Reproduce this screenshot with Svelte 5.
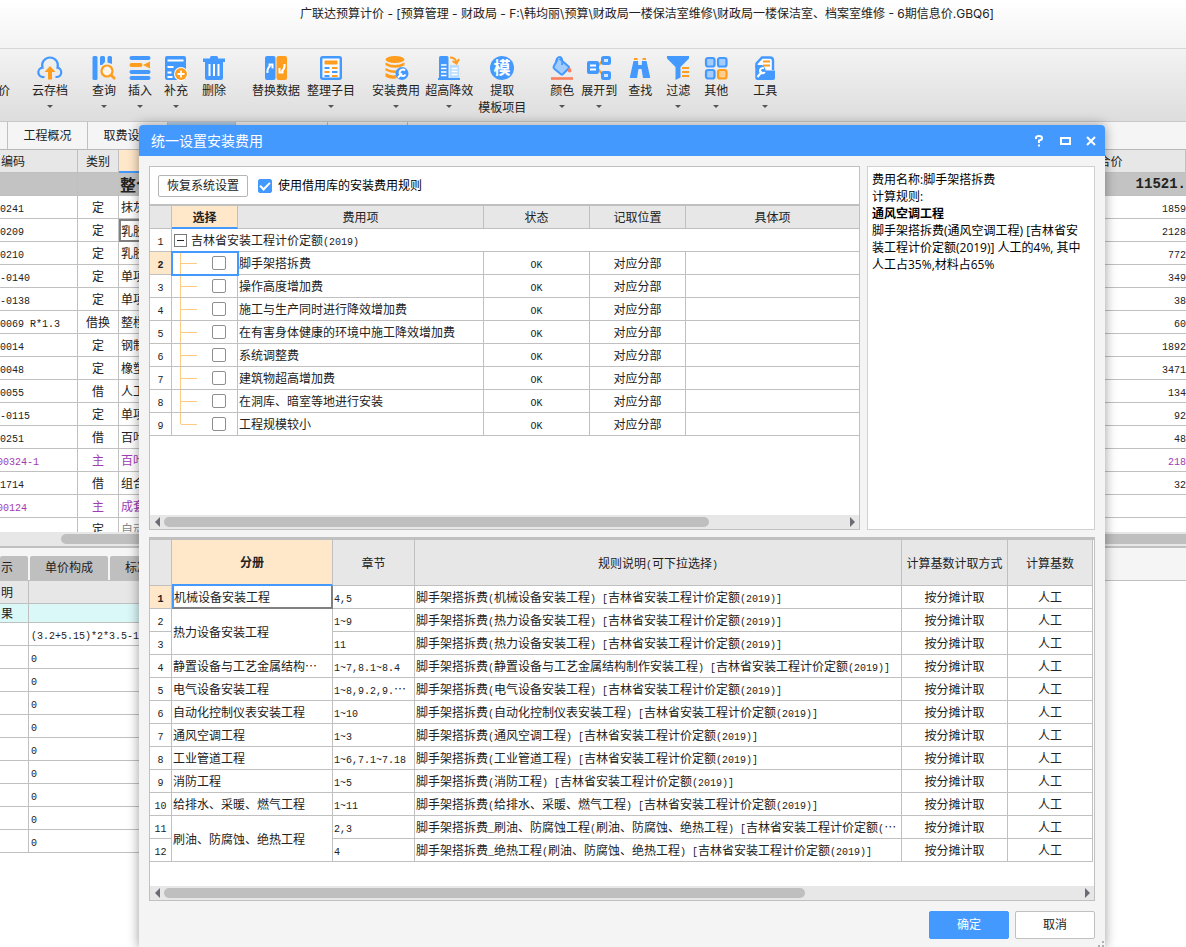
<script lang="ts">
    type Tool = { label: string; sub?: string; icon: string; arrow?: boolean };
    type Group = { lead: number; gap: number; tools: Tool[] };

    const blue = "#4499ff";
    const orange = "#ff9d1e";

    const icons: Record<string, string> = {
        cloud: `<path d="M6.500 21H5.500a4.500 4.500 0 0 1-1-9.300A7.900 7.900 0 0 1 12 1.500a7.900 7.900 0 0 1 7.500 10.200a4.700 4.700 0 0 1-1 9.300H17.500" fill="none" stroke="${blue}" stroke-width="2.200"/><path d="M12 10l5.500 6H14v7.500h-4V16H6.500z" fill="${orange}"/>`,
        query: `<rect x="0.500" y="0" width="5" height="24" rx="1.500" fill="${blue}"/><path d="M8 1.500Q8 0 9.500 0h2Q13 0 13 1.500V6l-3 3H8zM15.500 1.500Q15.500 0 17 0h1.500Q20 0 20 1.500V8l-4.500-1.500z" fill="${blue}"/><circle cx="15" cy="15" r="5.500" fill="#fff5e8" stroke="${orange}" stroke-width="2.200"/><path d="M19 19l4 4" stroke="${orange}" stroke-width="2.600"/>`,
        insert: `<path d="M3.500 2h17M3.500 16h17M3.500 22h17" stroke="${blue}" stroke-width="4" stroke-linecap="round"/><path d="M3.500 9h9" stroke="${orange}" stroke-width="4" stroke-linecap="round"/><path d="M15 9l7-3.500v7z" fill="${orange}"/>`,
        add: `<rect x="1" y="0" width="21" height="24" rx="2" fill="${blue}"/><path d="M3.500 4.500h16M3.500 11h6M3.500 16.500h4M3.500 21h5" stroke="#fff" stroke-width="2"/><circle cx="17" cy="18" r="7" fill="#fff"/><circle cx="17" cy="18" r="6" fill="${orange}"/><path d="M17 14.500v7M13.500 18h7" stroke="#fff" stroke-width="1.800"/>`,
        trash: `<path d="M1 2.500h7V1.500Q8 0 9.500 0h5Q16 0 16 1.500v1h7V6H1z" fill="${blue}"/><path d="M3 5h18v17q0 2-2 2H5q-2 0-2-2z" fill="${blue}"/><path d="M7.500 8v12M12 8v12M16.500 8v12" stroke="#fff" stroke-width="2"/>`,
        swap: `<rect x="1" y="0" width="10.500" height="24" rx="2" fill="${blue}"/><rect x="12.500" y="0" width="10.500" height="24" rx="2" fill="${orange}"/><path d="M3.500 17q-.5-5 3-7.500M4.500 8.500h4v4" fill="none" stroke="#fff" stroke-width="2"/><path d="M20.500 8q.5 5-3 7.500M15.500 12v4.500h4" fill="none" stroke="#fff" stroke-width="2"/>`,
        list: `<rect x="2.200" y="1.200" width="19.600" height="21.600" rx="1.500" fill="#f7faff" stroke="${blue}" stroke-width="2.400"/><rect x="5.500" y="4.500" width="13" height="4" rx="1" fill="${orange}"/><path d="M5.500 12h5M13 16h5.500M5.500 20h5" stroke="${blue}" stroke-width="2"/><path d="M13 12h5.500M5.500 16h5M13 20h5.500" stroke="${orange}" stroke-width="2"/>`,
        coins: `<ellipse cx="11" cy="3.500" rx="9.500" ry="3.500" fill="${orange}"/><path d="M1.500 6.500q9 5 19 0v2.800q-9 5-19 0zM1.500 12q9 5 19 0v2.500q-9 5-19 0zM1.500 17q6 3.500 11 2v3.200q-6 1.500-11-1.500z" fill="${orange}"/><circle cx="18" cy="17.500" r="6.500" fill="${blue}"/><path d="M14 21.500l4-4M21 14.500a3.200 3.200 0 1 0 .5 4" stroke="#fff" stroke-width="2" fill="none"/>`,
        tower: `<path d="M2 24V1.500Q2 0 3.500 0H10q1.500 0 1.500 1.500V24z" fill="${blue}"/><path d="M4 9h5.500M4 12.500h5.500M4 16h5.500M4 19.500h5.500" stroke="#fff" stroke-width="1.600"/><path d="M13 9h9v13h-9z" fill="#b9dcff"/><path d="M14.500 12.500h6M14.500 15.500h6M14.500 18.500h6" stroke="#fff" stroke-width="1.500"/><path d="M1 23h22" stroke="${blue}" stroke-width="2"/><path d="M13 1.500q5.500 0 6.500 5M15.500 5l4 2.500L22 3" fill="none" stroke="${orange}" stroke-width="2"/>`,
        extract: `<circle cx="12" cy="12" r="12" fill="${blue}"/><text x="12" y="18" text-anchor="middle" font-size="17" font-weight="bold" fill="#fff">模</text>`,
        paint: `<path d="M9.500 2.500l9 8q1 1 0 2L13 18q-1 1-2 .2L4.500 13q-1.500-1-.8-2.500l4-7.500" fill="#a3ccff" stroke="${blue}" stroke-width="2"/><path d="M6 7q0-6 4-6 3 0 2 8" fill="none" stroke="${blue}" stroke-width="1.800"/><path d="M19.500 11q3 3.500 1.500 5-1.500 1-3-.2-.8-1.300 1.500-4.800z" fill="#fa7f5e"/><path d="M1 22.500h22" stroke="#fa7f5e" stroke-width="2.600"/>`,
        expand: `<path d="M11 10l5-6M11 13l5 6" stroke="${orange}" stroke-width="2"/><rect x="0" y="5" width="12" height="13" rx="2" fill="${blue}"/><path d="M3 9.500h6M3 13.500h6" stroke="#fff" stroke-width="1.800"/><rect x="15.500" y="1.500" width="7" height="6" rx="1" fill="#d3e8ff" stroke="${blue}" stroke-width="3"/><rect x="15.500" y="16.500" width="7" height="6" rx="1" fill="#d3e8ff" stroke="${blue}" stroke-width="3"/>`,
        find: `<path d="M5.500 5H10l.5 8L9 22H2.500Q1.500 22 2 20.500zM18.500 5H14l-.5 8L15 22h6.500q1 0 .5-1.500z" fill="${blue}"/><path d="M9.500 9h5v4h-5z" fill="${blue}"/><path d="M6 3h3.500M14.500 3H18" stroke="${orange}" stroke-width="2"/>`,
        filter: `<path d="M1 0h22v2.500L14.500 11v10.500L9.500 24V11L1 2.500z" fill="${blue}"/><path d="M16 12h7M16 16h7M16 20h7" stroke="${orange}" stroke-width="2"/>`,
        other: `<g fill="#a3ccff" stroke="${blue}" stroke-width="2.200"><rect x="2" y="2" width="8.500" height="8.500" rx="2"/><rect x="14" y="2" width="8.500" height="8.500" rx="2"/><rect x="2" y="14" width="8.500" height="8.500" rx="2"/></g><rect x="14" y="14" width="8.500" height="8.500" rx="2" fill="#ffce8f" stroke="${orange}" stroke-width="2.200"/>`,
        kit: `<path d="M3.500 12V7.500l5.500-6h8q3 0 3 3V14" fill="#fff" stroke="${blue}" stroke-width="2.400"/><path d="M10 5.500h7M10 9.500h7" stroke="${orange}" stroke-width="2"/><path d="M2.300 9H9q3.500 2 3.500 5.500h9.500V22q0 2-2 2H4.300q-2 0-2-2z" fill="${blue}"/><path d="M4.500 21l4.500-5.500M11 12.500a2.600 2.600 0 1 0 .8 3.500" stroke="#fff" stroke-width="2" fill="none"/>`,
    };

    const groups: Group[] = [
        { lead: 22, gap: 0, tools: [{ label: "云存档", icon: "cloud", arrow: true }] },
        {
            lead: 24,
            gap: 12,
            tools: [
                { label: "查询", icon: "query", arrow: true },
                { label: "插入", icon: "insert", arrow: true },
                { label: "补充", icon: "add", arrow: true },
            ],
        },
        { lead: 14, gap: 0, tools: [{ label: "删除", icon: "trash" }] },
        {
            lead: 26,
            gap: 7,
            tools: [
                { label: "替换数据", icon: "swap" },
                { label: "整理子目", icon: "list", arrow: true },
            ],
        },
        {
            lead: 17,
            gap: 5,
            tools: [
                { label: "安装费用", icon: "coins", arrow: true },
                { label: "超高降效", icon: "tower", arrow: true },
                { label: "提取", sub: "模板项目", icon: "extract" },
            ],
        },
        {
            lead: 24,
            gap: 7,
            tools: [
                { label: "颜色", icon: "paint", arrow: true },
                { label: "展开到", icon: "expand", arrow: true },
            ],
        },
        {
            lead: 11,
            gap: 14,
            tools: [
                { label: "查找", icon: "find" },
                { label: "过滤", icon: "filter", arrow: true },
                { label: "其他", icon: "other", arrow: true },
            ],
        },
        { lead: 25, gap: 0, tools: [{ label: "工具", icon: "kit", arrow: true }] },
    ];

    const budget = [
        { code: "0241", kind: "定", name: "抹灰", total: "1859" },
        { code: "0209", kind: "定", name: "乳胶", total: "2128", focus: true },
        { code: "0210", kind: "定", name: "乳胶", total: "772" },
        { code: "-0140", kind: "定", name: "单项", total: "349" },
        { code: "-0138", kind: "定", name: "单项", total: "38" },
        { code: "0069 R*1.3", kind: "借换", name: "整樘", total: "60" },
        { code: "0014", kind: "定", name: "钢制", total: "1892" },
        { code: "0048", kind: "定", name: "橡塑", total: "3471" },
        { code: "0055", kind: "借", name: "人工", total: "134" },
        { code: "-0115", kind: "定", name: "单项", total: "92" },
        { code: "0251", kind: "借", name: "百叶", total: "48" },
        { code: "00324-1", kind: "主", name: "百叶", total: "218", main: true },
        { code: "1714", kind: "借", name: "组合", total: "32" },
        { code: "00124", kind: "主", name: "成套", total: "", main: true },
        { code: "", kind: "定", name: "自动", total: "", auto: true },
    ];

    const quantities = ["(3.2+5.15)*2*3.5-1", "0", "0", "0", "0", "0", "0", "0", "0", "0"];

    let fees = $state(
        [
            "脚手架搭拆费",
            "操作高度增加费",
            "施工与生产同时进行降效增加费",
            "在有害身体健康的环境中施工降效增加费",
            "系统调整费",
            "建筑物超高增加费",
            "在洞库、暗室等地进行安装",
            "工程规模较小",
        ].map((name) => ({ name, checked: false })),
    );
    let borrow = $state(true);

    const quota = "[吉林省安装工程计价定额(2019)]";
    const rules = [
        { book: "机械设备安装工程", span: 1, chapter: "4,5", rule: `脚手架搭拆费(机械设备安装工程) ${quota}` },
        { book: "热力设备安装工程", span: 2, chapter: "1~9", rule: `脚手架搭拆费(热力设备安装工程) ${quota}` },
        { span: 0, chapter: "11", rule: `脚手架搭拆费(热力设备安装工程) ${quota}` },
        { book: "静置设备与工艺金属结构…", span: 1, chapter: "1~7,8.1~8.4", rule: `脚手架搭拆费(静置设备与工艺金属结构制作安装工程) ${quota}` },
        { book: "电气设备安装工程", span: 1, chapter: "1~8,9.2,9.…", rule: `脚手架搭拆费(电气设备安装工程) ${quota}` },
        { book: "自动化控制仪表安装工程", span: 1, chapter: "1~10", rule: `脚手架搭拆费(自动化控制仪表安装工程) ${quota}` },
        { book: "通风空调工程", span: 1, chapter: "1~3", rule: `脚手架搭拆费(通风空调工程) ${quota}` },
        { book: "工业管道工程", span: 1, chapter: "1~6,7.1~7.18", rule: `脚手架搭拆费(工业管道工程) ${quota}` },
        { book: "消防工程", span: 1, chapter: "1~5", rule: `脚手架搭拆费(消防工程) ${quota}` },
        { book: "给排水、采暖、燃气工程", span: 1, chapter: "1~11", rule: `脚手架搭拆费(给排水、采暖、燃气工程) ${quota}` },
        { book: "刷油、防腐蚀、绝热工程", span: 2, chapter: "2,3", rule: "脚手架搭拆费_刷油、防腐蚀工程(刷油、防腐蚀、绝热工程) [吉林省安装工程计价定额(…" },
        { span: 0, chapter: "4", rule: `脚手架搭拆费_绝热工程(刷油、防腐蚀、绝热工程) ${quota}` },
    ];
</script>

<!-- latin runs are set half as wide as the chinese characters -->
{#snippet mixed(text: string)}
    {#each text.split(/([\x20-\x7e]+)/) as run, i}{#if i % 2}<span class="half">{run}</span>{:else}{run}{/if}{/each}
{/snippet}

{#snippet scrollbar(size: number)}
    <div class="scrollbar">
        <svg width="14" height="14"><path d="M10 2v10L5 7z" /></svg>
        <div class="track"><div class="thumb" style:width="{size}%"></div></div>
        <svg width="14" height="14"><path d="M5 2v10l5-5z" /></svg>
    </div>
{/snippet}

<div class="app">
    <header class="titlebar">
        广联达预算计价 - [预算管理 - 财政局 - F:\韩均丽\预算\财政局一楼保洁室维修\财政局一楼保洁室、档案室维修 - 6期信息价.GBQ6]
    </header>

    <nav class="toolbar">
        <button class="tool cut"><span>价</span></button>
        {#each groups as group}
            <div class="group" style:margin-left="{group.lead}px" style:gap="{group.gap}px">
                {#each group.tools as tool}
                    <button class="tool">
                        <svg width="24" height="24" viewBox="0 0 24 24">{@html icons[tool.icon]}</svg>
                        <span>{tool.label}</span>
                        {#if tool.sub}<span>{tool.sub}</span>{/if}
                        {#if tool.arrow}<i class="arrow"></i>{/if}
                    </button>
                {/each}
            </div>
        {/each}
    </nav>

    <nav class="tabs">
        <button class="stub" aria-label="上一页"></button>
        <button>工程概况</button>
        <button>取费设置</button>
        <button class="active" aria-label="预算书"></button>
        <button class="wide" aria-label="人材机"></button>
        <button aria-label="费用"></button>
    </nav>

    <div class="budget">
        <table>
            <colgroup><col class="w78" /><col class="w41" /><col /><col class="w150" /></colgroup>
            <thead>
                <tr><th class="left">编码</th><th>类别</th><th class="current"></th><th>合价</th></tr>
            </thead>
            <tbody>
                <tr class="sum"><td></td><td></td><td>整个</td><td class="num">11521.</td></tr>
                {#each budget as row}
                    <tr class:main={row.main} class:auto={row.auto}>
                        <td class="code">{@render mixed(row.code)}</td>
                        <td class="center">{row.kind}</td>
                        <td class="name" class:focus={row.focus}>{row.name}</td>
                        <td class="num">{@render mixed(row.total)}</td>
                    </tr>
                {/each}
            </tbody>
        </table>
    </div>
    <div class="splitter"><div></div></div>

    <nav class="subtabs">
        <button class="first">示</button>
        <button>单价构成</button>
        <button>标准换算</button>
    </nav>
    <table class="quantity">
        <colgroup><col class="w29" /><col /></colgroup>
        <thead>
            <tr><th class="left">明</th><th></th></tr>
        </thead>
        <tbody>
            <tr class="result"><td>果</td><td></td></tr>
            {#each quantities as value}
                <tr><td></td><td>{@render mixed(value)}</td></tr>
            {/each}
        </tbody>
    </table>

    <div class="dialog" role="dialog" aria-labelledby="dialog-title">
        <header>
            <h1 id="dialog-title">统一设置安装费用</h1>
            <button aria-label="帮助">
                <svg width="12" height="12"><path d="M3 4V2.500Q3 1 6 1t3 2.200Q9 5 6 5.500V8M6 9.500v2" /></svg>
            </button>
            <button aria-label="最大化">
                <svg width="12" height="12"><path d="M2 3h9v6H2z" /></svg>
            </button>
            <button aria-label="关闭">
                <svg width="12" height="12"><path d="M2 2l8 8M10 2l-8 8" /></svg>
            </button>
        </header>

        <div class="upper">
            <section class="panel">
                <div class="options">
                    <button class="restore">恢复系统设置</button>
                    <label><input type="checkbox" bind:checked={borrow} />使用借用库的安装费用规则</label>
                </div>
                <div class="sheet fees">
                    <table>
                        <colgroup>
                            <col class="w22" /><col class="w66" /><col class="w246" /><col class="w106" /><col class="w96" /><col />
                        </colgroup>
                        <thead>
                            <tr>
                                <th></th>
                                <th class="current">选择</th>
                                <th>费用项</th>
                                <th>状态</th>
                                <th>记取位置</th>
                                <th>具体项</th>
                            </tr>
                        </thead>
                        <tbody>
                            <tr>
                                <td class="index">{@render mixed("1")}</td>
                                <td colspan="5">
                                    <div class="root">
                                        <button class="toggle" aria-label="折叠"></button>
                                        <span>{@render mixed("吉林省安装工程计价定额(2019)")}</span>
                                    </div>
                                </td>
                            </tr>
                            {#each fees as fee, i}
                                <tr>
                                    <td class="index" class:picked={i === 0}>{@render mixed(String(i + 2))}</td>
                                    <td class="pick" class:selected={i === 0}>
                                        <div class="leaf">
                                            <i class="branch" class:last={i === fees.length - 1}></i>
                                            <input type="checkbox" aria-label={fee.name} bind:checked={fee.checked} />
                                        </div>
                                    </td>
                                    <td>{fee.name}</td>
                                    <td class="center">{@render mixed("OK")}</td>
                                    <td class="center">对应分部</td>
                                    <td></td>
                                </tr>
                            {/each}
                        </tbody>
                    </table>
                </div>
                {@render scrollbar(80)}
            </section>

            <section class="panel info">
                <p>费用名称:脚手架搭拆费</p>
                <p>计算规则:</p>
                <p><b>通风空调工程</b></p>
                <p>脚手架搭拆费(通风空调工程) [吉林省安装工程计价定额(2019)] 人工的4%, 其中人工占35%,材料占65%</p>
            </section>
        </div>

        <section class="panel">
            <div class="sheet rules">
                <table>
                    <colgroup>
                        <col class="w22" /><col class="w161" /><col class="w82" /><col /><col class="w106" /><col class="w85" />
                    </colgroup>
                    <thead>
                        <tr>
                            <th></th>
                            <th class="current">分册</th>
                            <th>章节</th>
                            <th>{@render mixed("规则说明(可下拉选择)")}</th>
                            <th>计算基数计取方式</th>
                            <th>计算基数</th>
                        </tr>
                    </thead>
                    <tbody>
                        {#each rules as row, i}
                            <tr>
                                <td class="index" class:picked={i === 0}>{@render mixed(String(i + 1))}</td>
                                {#if row.span}
                                    <td rowspan={row.span} class:editing={i === 0}>{row.book}</td>
                                {/if}
                                <td>{@render mixed(row.chapter)}</td>
                                <td>{@render mixed(row.rule)}</td>
                                <td class="center">按分摊计取</td>
                                <td class="center">人工</td>
                            </tr>
                        {/each}
                    </tbody>
                </table>
            </div>
            {@render scrollbar(70)}
        </section>

        <footer>
            <button class="primary">确定</button>
            <button>取消</button>
        </footer>
        <svg class="grip" width="8" height="8"><path d="M5 1h2v2H5zM5 5h2v2H5zM1 5h2v2H1z" /></svg>
    </div>
</div>

<style>
    :global(body) {
        margin: 0;
        background: #fff;
    }

    .app {
        --line: #c0c0c0;
        --head: #e7e7e7;
        --blue: #4499ff;
        --peach: #ffe7ca;
        position: relative;
        min-height: 100vh;
        overflow: hidden;
        color: #222;
        font: 12px/20px "Open Sans", "Noto Sans CJK SC", sans-serif;
    }

    button {
        padding: 0;
        border: none;
        background: none;
        color: inherit;
        font: inherit;
    }

    .titlebar {
        box-sizing: border-box;
        height: 49px;
        padding: 4px 0 0 108px;
        border-bottom: 1px solid #d6d6d6;
        background: linear-gradient(#fff, #f3f3f3);
        font-family: Inter, "Noto Sans CJK SC", sans-serif;
        text-align: center;
        white-space: nowrap;
    }

    .toolbar {
        box-sizing: border-box;
        display: flex;
        height: 73px;
        padding-top: 7px;
        border-bottom: 1px solid #c8c8c8;
        background: linear-gradient(#f3f3f3, #dddddd);
    }
    .group {
        display: flex;
        align-items: start;
    }
    .tool {
        display: flex;
        flex-direction: column;
        align-items: center;
        line-height: 17px;
        white-space: nowrap;

        & svg {
            margin-bottom: 2px;
            overflow: visible;
            font-family: "Noto Sans CJK SC", sans-serif;
        }
        &.cut {
            width: 10px;
            padding-top: 26px;
            align-items: end;
        }
    }
    .arrow {
        margin-top: 6px;
        border: 3px solid transparent;
        border-top-color: #555;
        border-bottom: none;
    }

    .tabs {
        box-sizing: border-box;
        display: flex;
        height: 28px;
        background: #f5f5f5;
        border-bottom: 1px solid #b8b8b8;

        & button {
            box-sizing: border-box;
            width: 80px;
            border-right: 1px solid var(--line);
        }
        & .stub {
            width: 8px;
        }
        & .active {
            width: 68px;
            background: #b4d2ee;
        }
        & .wide {
            width: 92px;
        }
    }

    table {
        width: 100%;
        table-layout: fixed;
        border-collapse: separate;
        border-spacing: 0;
        font-family: "Noto Sans CJK SC", sans-serif;
    }
    th,
    td {
        box-sizing: border-box;
        height: 23px;
        padding: 0 1px;
        border: solid var(--line);
        border-width: 0 1px 1px 0;
        line-height: 20px;
        white-space: nowrap;
        overflow: hidden;
        text-align: left;
    }
    th {
        background: var(--head);
        font-weight: normal;
        text-align: center;

        &.left {
            text-align: left;
        }
        &.current {
            background: var(--peach);
            border-bottom: 2px solid var(--blue);
            font-weight: bold;
        }
    }
    .half {
        font-family: "Liberation Mono", monospace;
        font-size: 10px;
        line-height: 1;
        white-space: pre;
    }
    .center {
        text-align: center;
    }
    .w22 {
        width: 22px;
    }
    .w29 {
        width: 29px;
    }
    .w41 {
        width: 41px;
    }
    .w66 {
        width: 66px;
    }
    .w78 {
        width: 78px;
    }
    .w82 {
        width: 82px;
    }
    .w85 {
        width: 85px;
    }
    .w96 {
        width: 96px;
    }
    .w106 {
        width: 106px;
    }
    .w150 {
        width: 150px;
    }
    .w161 {
        width: 161px;
    }
    .w246 {
        width: 246px;
    }

    .budget {
        height: 382px;
        overflow: hidden;

        & .sum td {
            background: #c3c3c3;
            font-size: 16px;
            font-weight: bold;
        }
        & .sum .num {
            font-family: "Liberation Mono", monospace;
            font-size: 14px;
        }
        & .code {
            padding: 0;
        }
        & .num {
            padding: 0;
            border-right: none;
            text-align: right;
        }
        & .name {
            padding-left: 2px;
        }
        & .focus {
            padding-left: 0;
            border: 2px solid #808080;
            line-height: 19px;
        }
        & .main {
            color: #a13cb4;
        }
        & .main .code {
            text-indent: -3px;
        }
        & .auto .name {
            color: #888;
        }
    }

    .splitter {
        padding: 2px 0 2px 61px;
        background: var(--head);
        border-bottom: 2px solid var(--line);

        & div {
            height: 10px;
            border-radius: 5px 0 0 5px;
            background: #bfbfbf;
        }
    }

    .subtabs {
        box-sizing: border-box;
        display: flex;
        gap: 2px;
        height: 33px;
        padding-top: 8px;
        border-bottom: 1px solid var(--line);
        background: #f5f5f5;

        & button {
            width: 78px;
            border-radius: 2px 2px 0 0;
            background: #bfbfbf;
        }
        & .first {
            width: 28px;
            padding-left: 1px;
            text-align: left;
        }
    }

    .quantity {
        width: 60%;

        & .result td {
            height: 19px;
            background: #dbf8f9;
            line-height: 18px;
        }
        & td:last-child {
            padding-left: 2px;
        }
    }

    .dialog {
        position: absolute;
        top: 125px;
        left: 139px;
        right: 81px;
        border-radius: 4px 4px 0 0;
        background: #f4f4f4;
        box-shadow: 0 0 12px rgb(0 0 0 / 40%);

        & > header {
            display: flex;
            align-items: center;
            height: 31px;
            padding: 0 1px 0 12px;
            border-radius: 4px 4px 0 0;
            background: var(--blue);
            color: #fff;
        }
        & h1 {
            flex: 1;
            margin: 0;
            font-size: 14px;
            font-weight: normal;
        }
        & header button {
            display: grid;
            place-items: center;
            width: 26px;
            height: 26px;
        }
        & header path {
            fill: none;
            stroke: #fff;
            stroke-width: 2;
        }
        & > .panel {
            margin: 7px 10px 0;
        }
        & footer {
            display: flex;
            justify-content: end;
            gap: 6px;
            padding: 10px 10px 9px;
        }
        & footer button {
            box-sizing: border-box;
            width: 80px;
            height: 28px;
            border: 1px solid var(--line);
            border-radius: 2px;
            background: #fff;
        }
        & footer .primary {
            border-color: var(--blue);
            background: var(--blue);
            color: #fff;
        }
    }
    .grip {
        position: absolute;
        right: 0;
        bottom: 0;
        fill: #b0b0b0;
    }

    .upper {
        display: flex;
        gap: 7px;
        padding: 10px 10px 0;

        & .panel:first-child {
            flex: 1;
            min-width: 0;
        }
    }
    .panel {
        border: 1px solid var(--line);
        background: #fff;
    }
    .info {
        box-sizing: border-box;
        width: 228px;
        padding: 4px 8px 4px 4px;
        border-color: #d0d0d0;
        color: #000;
        line-height: 17px;

        & p {
            margin: 0;
        }
    }

    .options {
        display: flex;
        align-items: center;
        gap: 10px;
        height: 37px;
        padding-left: 8px;
        color: #000;

        & label {
            display: flex;
            align-items: center;
            gap: 6px;
        }
    }
    .restore {
        box-sizing: border-box;
        width: 90px;
        height: 22px;
        border: 1px solid #b5b5b5;
        border-radius: 2px;
        color: #222;
    }
    input[type="checkbox"] {
        appearance: none;
        display: grid;
        place-items: center;
        box-sizing: border-box;
        width: 14px;
        height: 14px;
        margin: 0;
        border: 1px solid #8f8f8f;
        border-radius: 2px;
        background: #fff;

        &:checked {
            border-color: var(--blue);
            background: var(--blue);
        }
        &:checked::before {
            content: "";
            width: 8px;
            height: 4px;
            border: solid #fff;
            border-width: 0 0 2px 2px;
            transform: translateY(-1px) rotate(-45deg);
        }
    }

    .sheet {
        border-top: 2px solid var(--line);
        overflow: hidden;

        & .index {
            padding: 0;
            text-align: center;
        }
        & .picked {
            background: var(--peach);
            font-weight: bold;
        }
    }
    .fees {
        height: 309px;

        & tr > :last-child {
            border-right: none;
        }
        & .pick {
            padding: 0;
        }
        & .selected {
            outline: 2px solid var(--blue);
            outline-offset: -1px;
        }
    }
    .rules {
        height: 346px;
        padding-right: 1px;

        & th {
            height: 46px;
        }
        & .editing {
            border: 2px solid #808080;
            border-top: none;
            border-left-color: var(--blue);
            padding-left: 0;
        }
    }

    .root,
    .leaf {
        display: flex;
        align-items: center;
        height: 22px;
    }
    .root {
        gap: 4px;
        padding-left: 1px;
    }
    .toggle {
        display: grid;
        place-items: center;
        width: 13px;
        height: 13px;
        border: 1px solid #777;

        &::before {
            content: "";
            width: 7px;
            height: 1px;
            background: #222;
        }
    }
    .leaf {
        gap: 15px;
        padding-left: 8px;
    }
    .branch {
        width: 16px;
        height: 22px;
        border-left: 1px solid #ffcb82;

        &::before {
            content: "";
            display: block;
            height: 11px;
            border-bottom: 1px solid #ffcb82;
        }
        &.last {
            height: 11px;
            align-self: start;
        }
    }

    .scrollbar {
        display: flex;
        height: 14px;
        background: var(--head);

        & svg {
            fill: #6b6b75;
        }
    }
    .track {
        flex: 1;
        padding: 2px 0;
    }
    .thumb {
        height: 10px;
        border-radius: 5px;
        background: #bfbfbf;
    }
</style>
